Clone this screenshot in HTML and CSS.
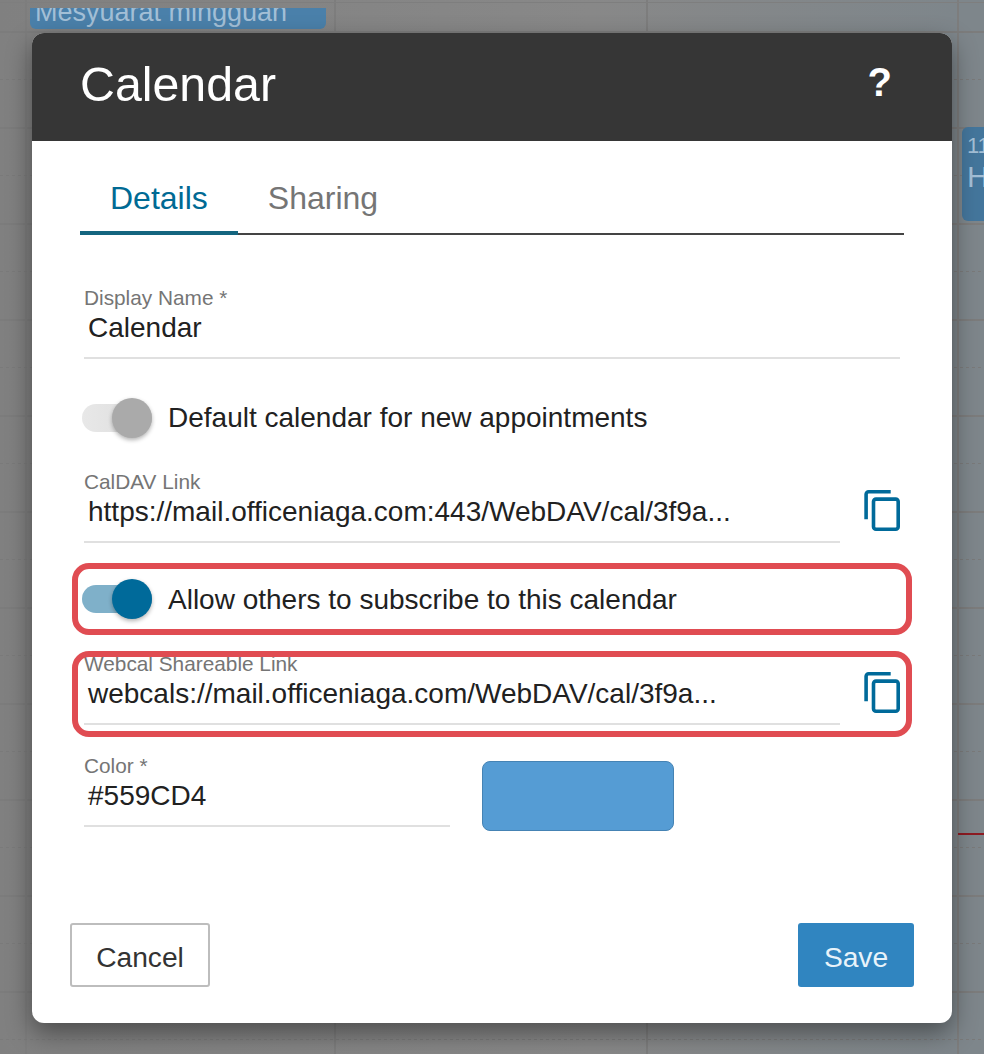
FILE: index.html
```html
<!DOCTYPE html>
<html lang="en">
<head>
<meta charset="utf-8">
<title>Calendar</title>
<link rel="stylesheet" href="styles.css">
</head>
<body>
<div class="calendar">
  <div class="event event-week">Mesyuarat mingguan</div>
  <div class="event event-side"><span class="event-time">11</span><span class="event-title">H</span></div>
  <div class="now-line"></div>
</div>
<section class="dialog">
  <header class="dialog-head">
    <h1 class="dialog-title">Calendar</h1>
    <span class="help">?</span>
  </header>
  <div class="dialog-body">
    <nav class="tabs">
      <span class="tab tab-active">Details</span>
      <span class="tab">Sharing</span>
    </nav>
    <form class="form">
      <div class="field field-name">
        <span class="field-label">Display Name *</span>
        <span class="field-value">Calendar</span>
      </div>
      <div class="switch-row switch-default">
        <span class="switch"><span class="knob"></span></span>
        <span class="switch-text">Default calendar for new appointments</span>
      </div>
      <div class="link-row link-caldav">
        <div class="field field-link">
          <span class="field-label">CalDAV Link</span>
          <span class="field-value">https://mail.officeniaga.com:443/WebDAV/cal/3f9a...</span>
        </div>
        <svg class="copy" viewBox="0 0 40 45" width="40" height="45"><path d="M4.1 31.3V6.3A2.5 2.5 0 0 1 6.6 3.8H28.7"/><rect x="11.5" y="11.1" width="24.7" height="30.1" rx="2.5"/></svg>
      </div>
      <div class="switch-row switch-subscribe">
        <span class="switch switch-on"><span class="knob"></span></span>
        <span class="switch-text">Allow others to subscribe to this calendar</span>
      </div>
      <div class="link-row link-webcal">
        <div class="field field-link">
          <span class="field-label">Webcal Shareable Link</span>
          <span class="field-value">webcals://mail.officeniaga.com/WebDAV/cal/3f9a...</span>
        </div>
        <svg class="copy" viewBox="0 0 40 45" width="40" height="45"><path d="M4.1 31.3V6.3A2.5 2.5 0 0 1 6.6 3.8H28.7"/><rect x="11.5" y="11.1" width="24.7" height="30.1" rx="2.5"/></svg>
      </div>
      <div class="color-row">
        <div class="field field-color">
          <span class="field-label">Color *</span>
          <span class="field-value">#559CD4</span>
        </div>
        <span class="swatch"></span>
      </div>
    </form>
  </div>
  <footer class="dialog-foot">
    <button class="btn btn-cancel" type="button">Cancel</button>
    <button class="btn btn-save" type="button">Save</button>
  </footer>
  <div class="mark mark-subscribe"></div>
  <div class="mark mark-webcal"></div>
</section>
</body>
</html>
```
FILE: styles.css
```css
* { box-sizing: border-box; }
html, body { margin: 0; height: 100%; }
body {
  position: relative;
  width: 984px;
  height: 1054px;
  overflow: hidden;
  font-family: "Liberation Sans", Arial, sans-serif;
  background: #868686;
}
.calendar {
  position: absolute;
  inset: 0;
  background-color: #898b8c;
  background-image:
    linear-gradient(#7c7c7c 2px, transparent 2px),
    linear-gradient(#7e7e7e 1px, transparent 1px),
    linear-gradient(90deg, transparent 25px, #7d7d7d 25px, #7d7d7d 27px, transparent 27px, transparent 334px, #7d7d7d 334px, #7d7d7d 336px, transparent 336px, transparent 646px, #7d7d7d 646px, #7d7d7d 648px, transparent 648px, transparent 957px, #7d7d7d 957px, #7d7d7d 959px, transparent 959px),
    linear-gradient(90deg, #808080 0, #888 60%, #7e868b 97%);
  background-size: 100% 96px, 100% 100%, 100% 100%, 100% 100%;
  background-position: 0 31px, 0 2px, 0 0, 0 0;
  background-repeat: repeat, no-repeat, no-repeat, no-repeat;
}
.calendar::before {
  content: "";
  position: absolute;
  inset: 0;
  background: repeating-linear-gradient(90deg, #7a7a7a 0 3px, transparent 3px 6px);
  -webkit-mask-image: repeating-linear-gradient(transparent 0 79px, #000 79px 80px, transparent 80px 96px);
  mask-image: repeating-linear-gradient(transparent 0 79px, #000 79px 80px, transparent 80px 96px);
}
.event {
  position: absolute;
  color: #a3bfd6;
  overflow: hidden;
}
.event-week {
  left: 30px;
  top: 8px;
  width: 296px;
  height: 21px;
  border-radius: 0 0 6px 6px;
  padding-left: 5px;
  font-size: 27px;
  line-height: 8px;
  background: #4a80aa;
}
.event-side {
  left: 962px;
  top: 127px;
  width: 40px;
  height: 94px;
  border-radius: 6px;
  background: #44769c;
  padding: 6px 0 0 5px;
  display: flex;
  flex-direction: column;
}
.event-time { font-size: 22px; line-height: 26px; }
.event-title { font-size: 30px; line-height: 36px; }
.now-line {
  position: absolute;
  left: 958px;
  top: 833px;
  width: 26px;
  height: 2px;
  background: #8e1b22;
}
.dialog {
  position: absolute;
  left: 32px;
  top: 33px;
  width: 920px;
  height: 990px;
  display: flex;
  flex-direction: column;
  background: #fff;
  border-radius: 12px;
  box-shadow: 0 10px 26px rgba(0, 0, 0, .42);
}
.dialog-head {
  height: 108px;
  flex: none;
  display: flex;
  align-items: center;
  justify-content: space-between;
  padding: 0 60px 6px 48px;
  background: #363636;
  border-radius: 12px 12px 0 0;
  color: #fff;
}
.dialog-title {
  margin: 0;
  font-size: 48.3px;
  font-weight: 400;
}
.help {
  margin-bottom: 4px;
  font-size: 40px;
  font-weight: 700;
}
.dialog-body {
  padding: 0 48px;
  flex: 1;
}
.tabs {
  display: flex;
  height: 94px;
  border-bottom: 2px solid #444;
}
.tab {
  padding: 39px 30px 0;
  font-size: 32px;
  line-height: 36px;
  color: #757575;
  height: 94px;
}
.tab-active {
  color: #006a94;
  border-bottom: 4px solid #14657f;
}
.form {
  display: flex;
  flex-direction: column;
  padding-left: 4px;
}
.field {
  display: flex;
  flex-direction: column;
  height: 73px;
  border-bottom: 2px solid #e0e0e0;
}
.field-label {
  font-size: 20.8px;
  line-height: 24px;
  color: #757575;
}
.field-value {
  padding-left: 4px;
  font-size: 28px;
  line-height: 36px;
  color: #212121;
  white-space: nowrap;
}
.field-name { margin: 51px 4px 0 0; }
.field-link { width: 756px; }
.field-color { width: 366px; }
.switch-row {
  display: flex;
  align-items: center;
  height: 40px;
  margin-left: -2px;
  gap: 16px;
}
.switch-default { margin-top: 39px; }
.switch-subscribe { margin-top: 36px; }
.switch-subscribe .switch-text { margin-top: 2px; }
.switch {
  position: relative;
  width: 70px;
  height: 28px;
  border-radius: 14px;
  background: linear-gradient(90deg, #e8e8e8, #dcdcdc);
}
.knob {
  position: absolute;
  right: 0;
  top: -6px;
  width: 40px;
  height: 40px;
  border-radius: 50%;
  background: #aaa;
  box-shadow: 0 2px 4px rgba(0, 0, 0, .3);
}
.switch-on { background: #7fb0c9; }
.switch-on .knob { background: #006a9a; }
.switch-text {
  font-size: 28px;
  color: #212121;
}
.link-row {
  display: flex;
  align-items: flex-start;
  gap: 22px;
}
.link-caldav { margin-top: 32px; }
.link-webcal { margin-top: 33px; }
.copy {
  margin-top: 18px;
  fill: none;
  stroke: #006a9a;
  stroke-width: 3.6;
}
.color-row {
  display: flex;
  gap: 32px;
  margin-top: 29px;
}
.swatch {
  width: 192px;
  height: 70px;
  margin-top: 7px;
  border-radius: 8px;
  border: 1px solid #4583b4;
  background: #559cd4;
}
.dialog-foot {
  display: flex;
  justify-content: space-between;
  padding: 0 38px 36px;
  flex: none;
}
.btn {
  height: 64px;
  border-radius: 3px;
  font-family: inherit;
  font-size: 28.2px;
  padding: 5px 0 0;
}
.btn-cancel {
  width: 140px;
  background: #fff;
  border: 2px solid #bdbdbd;
  color: #333;
}
.btn-save {
  width: 116px;
  background: #3085c0;
  border: 0;
  color: #e8f3fa;
}
.mark {
  position: absolute;
  left: 40px;
  width: 840px;
  border: 6px solid #e04c52;
  border-radius: 17px;
  pointer-events: none;
}
.mark-subscribe { top: 530px; height: 72px; }
.mark-webcal { top: 618px; height: 86px; }
```
